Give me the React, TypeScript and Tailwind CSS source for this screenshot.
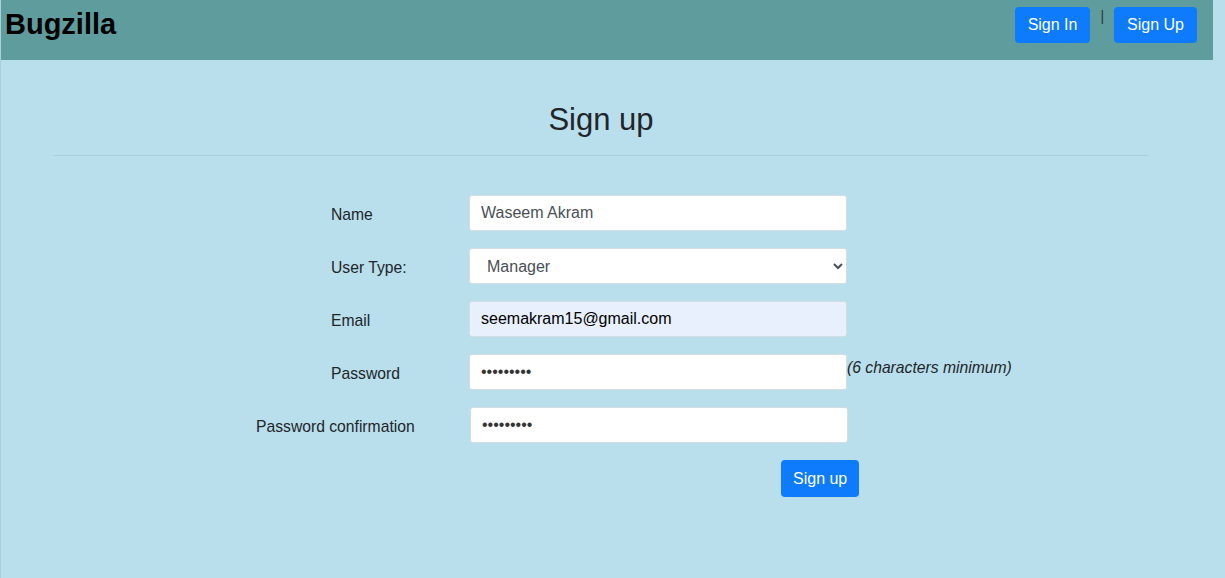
import React, { useState } from "react";

const font = { fontFamily: '"Liberation Sans", Arial, sans-serif' };

function Row({
  label,
  labelClass = "w-[138px]",
  children,
  hint,
}: {
  label: string;
  labelClass?: string;
  children: React.ReactNode;
  hint?: string;
}) {
  return (
    <div className="flex h-[53px] items-start">
      <label className={`${labelClass} pt-[8px] text-[15.7px] text-[#212529]`}>{label}</label>
      {children}
      {hint && <span className="pt-[2px] text-[15.7px] italic text-[#212529]">{hint}</span>}
    </div>
  );
}

const baseCls =
  "h-[36px] w-[378px] rounded-[3px] border border-[#d3dde2] px-[11px] text-[16px] outline-none";
const inputCls = `${baseCls} bg-white text-[#495057]`;
const pwCls = `${baseCls} bg-white text-[#333]`;
const autofillCls = `${baseCls} bg-[#e8f0fe] text-black`;

export default function App() {
  const [name, setName] = useState("Waseem Akram");
  const [type, setType] = useState("Manager");
  const [email, setEmail] = useState("seemakram15@gmail.com");
  const [pw, setPw] = useState("123456789");
  const [pw2, setPw2] = useState("123456789");

  return (
    <div className="min-h-[578px] w-full border-l border-[#a9d0dc] bg-[#b9dfec]" style={font}>
      <header className="flex h-[60px] w-[1212px] items-start justify-between bg-[#5f9c9e] pl-[4px] pr-[16px]">
        <h1 className="mt-[5px] text-[29px] font-bold leading-[38px] text-black">Bugzilla</h1>
        <nav className="mt-[7px] flex items-start">
          <button className="h-[36px] rounded-[4px] bg-[#0d7bfc] px-[13px] text-[16px] text-white">Sign In</button>
          <span className="mx-[10px] mt-[1px] text-[14px] leading-[16px] text-[#333]">|</span>
          <button className="h-[36px] rounded-[4px] bg-[#0d7bfc] px-[13px] text-[16px] text-white">Sign Up</button>
        </nav>
      </header>

      <main className="ml-[53px] w-[1094px]">
        <h2 className="pt-[40px] text-center text-[31px] leading-[40px] text-[#212529]">Sign up</h2>
        <hr className="mt-[15px] border-t border-[#a7d0dc]" />

        <form className="mt-[39px] pl-[277px]" onSubmit={(e) => e.preventDefault()}>
          <Row label="Name">
            <input className={inputCls} value={name} onChange={(e) => setName(e.target.value)} />
          </Row>
          <Row label="User Type:">
            <select
              className={`${inputCls} pl-[13px]`}
              value={type}
              onChange={(e) => setType(e.target.value)}
            >
              <option>Manager</option>
              <option>Developer</option>
              <option>QA</option>
            </select>
          </Row>
          <Row label="Email">
            <input className={autofillCls} value={email} onChange={(e) => setEmail(e.target.value)} />
          </Row>
          <Row label="Password" hint="(6 characters minimum)">
            <input type="password" className={pwCls} value={pw} onChange={(e) => setPw(e.target.value)} />
          </Row>
          <div className="-ml-[75px]">
            <Row label="Password confirmation" labelClass="w-[214px]">
              <input type="password" className={pwCls} value={pw2} onChange={(e) => setPw2(e.target.value)} />
            </Row>
          </div>
          <div className="pl-[450px]">
            <button
              type="submit"
              className="h-[37px] rounded-[4px] bg-[#0d7bfc] px-[12px] text-[16px] text-white"
            >
              Sign up
            </button>
          </div>
        </form>
      </main>
    </div>
  );
}
